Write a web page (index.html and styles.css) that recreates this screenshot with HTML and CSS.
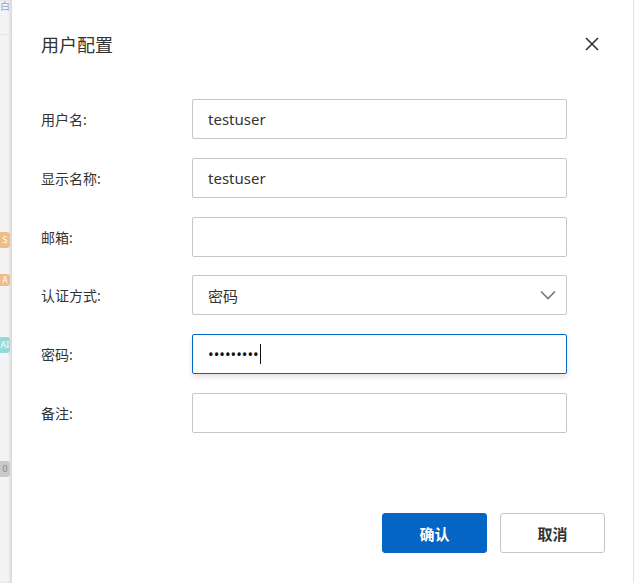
FILE: index.html
```html
<!DOCTYPE html>
<html>
<head>
<meta charset="utf-8">
<title>用户配置</title>
<link rel="stylesheet" href="styles.css">
</head>
<body>
<div class="page">
  <!-- sliver of the list page behind the dialog -->
  <div class="backdrop">
    <div class="bg-row top">白</div>
    <div class="bg-tag orange">S</div>
    <div class="bg-tag orange small">A</div>
    <div class="bg-tag teal">AI</div>
    <div class="bg-tag gray">0</div>
  </div>

  <div class="dialog">
    <div class="dialog-head">
      <h2 class="dialog-title">用户配置</h2>
      <span class="close">
        <svg width="14" height="14" viewBox="0 0 14 14"><path d="M1 1 L13 13 M13 1 L1 13" stroke="#333" stroke-width="1.6" fill="none"/></svg>
      </span>
    </div>

    <form class="user-form">
      <div class="row">
        <label>用户名:</label>
        <div class="field">testuser</div>
      </div>
      <div class="row">
        <label>显示名称:</label>
        <div class="field">testuser</div>
      </div>
      <div class="row">
        <label>邮箱:</label>
        <div class="field"></div>
      </div>
      <div class="row">
        <label>认证方式:</label>
        <div class="field select">密码
          <svg class="chevron" width="16" height="10" viewBox="0 0 16 10"><path d="M1 1.5 L8 8.5 L15 1.5" stroke="#777" stroke-width="1.6" fill="none"/></svg>
        </div>
      </div>
      <div class="row">
        <label>密码:</label>
        <div class="field focused"><span class="dots">•••••••••</span><span class="caret"></span></div>
      </div>
      <div class="row">
        <label>备注:</label>
        <div class="field"></div>
      </div>
    </form>

    <div class="dialog-foot">
      <button type="button" class="btn primary">确认</button>
      <button type="button" class="btn">取消</button>
    </div>
  </div>
</div>
</body>
</html>
```

FILE: styles.css
```css
html, body {
  margin: 0;
  height: 100%;
  background: #fff;
}
.page {
  display: flex;
  height: 583px;
  font-family: "Noto Sans", "Noto Sans CJK SC", sans-serif;
  color: #333;
}
.backdrop {
  width: 12px;
  flex: none;
  background: #f3f4f5;
  box-shadow: inset -2px 0 3px rgba(0, 0, 0, 0.12);
  overflow: hidden;
  display: flex;
  flex-direction: column;
  font-size: 10px;
  color: #9aa6b8;
}
.bg-row.top {
  height: 34px;
  line-height: 12px;
  border-bottom: 1px solid #e4e6e8;
}
.bg-tag {
  width: 10px;
  height: 16px;
  border-radius: 0 3px 3px 0;
  color: #fff;
  font-size: 9px;
  line-height: 16px;
  text-align: center;
}
.bg-tag.orange {
  background: #f1bd86;
  margin-top: 197px;
}
.bg-tag.orange.small {
  height: 12px;
  line-height: 12px;
  font-size: 8px;
  margin-top: 26px;
}
.bg-tag.teal {
  background: #95d9d9;
  margin-top: 51px;
}
.bg-tag.gray {
  background: #c9c9c9;
  color: #888;
  margin-top: 108px;
}

.dialog {
  flex: 1;
  padding: 0 28px 0 29px;
  border-right: 1px solid #e2e2e2;
  margin-right: 2px;
  display: flex;
  flex-direction: column;
}
.dialog-head {
  display: flex;
  align-items: center;
  justify-content: space-between;
  height: 88px;
}
.dialog-title {
  margin: 0;
  font-size: 18px;
  font-weight: normal;
  color: #333;
}
.close {
  display: flex;
  margin-right: 6px;
}

.user-form {
  display: flex;
  flex-direction: column;
  gap: 18.8px;
  margin-top: 11px;
}
.row {
  display: flex;
  align-items: center;
}
.row label {
  width: 151px;
  flex: none;
  font-size: 14px;
  color: #333;
}
.field {
  box-sizing: border-box;
  width: 375px;
  height: 40px;
  border: 1px solid #c3c6cc;
  border-radius: 2px;
  padding: 0 15px;
  display: flex;
  align-items: center;
  font-size: 15px;
  color: #333;
}
.field.select {
  justify-content: space-between;
  padding-right: 10px;
}
.field.focused {
  border-color: #0565c4;
  box-shadow: 0 3px 5px rgba(0, 0, 0, 0.12);
}
.dots {
  font-size: 15px;
  letter-spacing: 0;
  color: #111;
}
.caret {
  width: 1px;
  height: 20px;
  background: #111;
  margin-left: 1px;
}

.dialog-foot {
  display: flex;
  justify-content: flex-end;
  gap: 13px;
  margin-top: auto;
  margin-bottom: 30px;
}
.btn {
  width: 105px;
  height: 40px;
  border: 1px solid #c3c6cc;
  border-radius: 3px;
  background: #fff;
  color: #333;
  font-family: "Noto Sans CJK SC", sans-serif;
  font-size: 15px;
  font-weight: bold;
}
.btn.primary {
  background: #0565c4;
  border-color: #0565c4;
  color: #fff;
}
```
